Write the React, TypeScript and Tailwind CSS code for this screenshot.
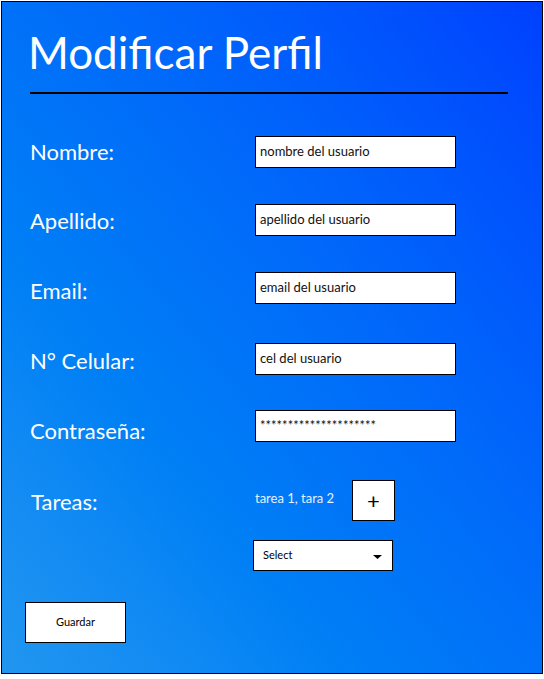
import React from "react";

const font = { fontFamily: "Lato, 'Noto Sans', sans-serif" };

function Row({ label, value, top, labelOffset }: { label: string; value: string; top: string; labelOffset: string }) {
  return (
    <div className={`flex items-center ${top}`}>
      <div className={`w-[225px] text-[22px] leading-none text-white ${labelOffset}`}>{label}</div>
      <div className="w-[201px] h-[32px] bg-white border border-black flex items-center pl-[4px] text-[13px] text-[#111]">
        {value}
      </div>
    </div>
  );
}

export default function App() {
  return (
    <div className="pt-px pl-px" style={font}>
      <div className="w-[542px] h-[673px] border border-black bg-gradient-to-tr from-[#2196f0] to-[#0040ff] pl-[28px] pt-[24px]">
        <h1 className="text-[44px] leading-[52px] text-white font-normal -ml-[2px]">Modificar Perfil</h1>
        <div className="w-[478px] h-[2px] bg-black mt-[14px]" />
        <Row label="Nombre:" value="nombre del usuario" top="mt-[42px]" labelOffset="mt-0" />
        <Row label="Apellido:" value="apellido del usuario" top="mt-[36px]" labelOffset="mt-[2px]" />
        <Row label="Email:" value="email del usuario" top="mt-[36px]" labelOffset="mt-[5px]" />
        <Row label="N° Celular:" value="cel del usuario" top="mt-[39px]" labelOffset="mt-[4px]" />
        <Row label="Contraseña:" value="*********************" top="mt-[34px]" labelOffset="mt-[11px]" />
        <div className="flex items-center mt-[38px] h-[41px]">
          <div className="w-[225px] text-[22px] leading-none text-white mt-[2px] pl-[1px]">Tareas:</div>
          <div className="w-[97px] text-[13px] text-[#e8f0ff] mb-[4px]">tarea 1, tara 2</div>
          <button className="w-[43px] h-[41px] bg-white border border-black flex items-center justify-center text-[22px] text-black leading-none">
            +
          </button>
        </div>
        <div className="ml-[223px] mt-[19px] w-[140px] h-[31px] bg-white border border-black flex items-center justify-between pl-[9px] pr-[10px] text-[11px] text-black">
          <span>Select</span>
          <svg width="9" height="4" viewBox="0 0 9 4" className="mt-[3px]"><path d="M0 0 L9 0 L4.5 4 Z" fill="#000" /></svg>
        </div>
        <button className="-ml-[5px] mt-[31px] w-[101px] h-[41px] bg-white border border-black flex items-center justify-center text-[11px] text-black">
          Guardar
        </button>
      </div>
    </div>
  );
}
